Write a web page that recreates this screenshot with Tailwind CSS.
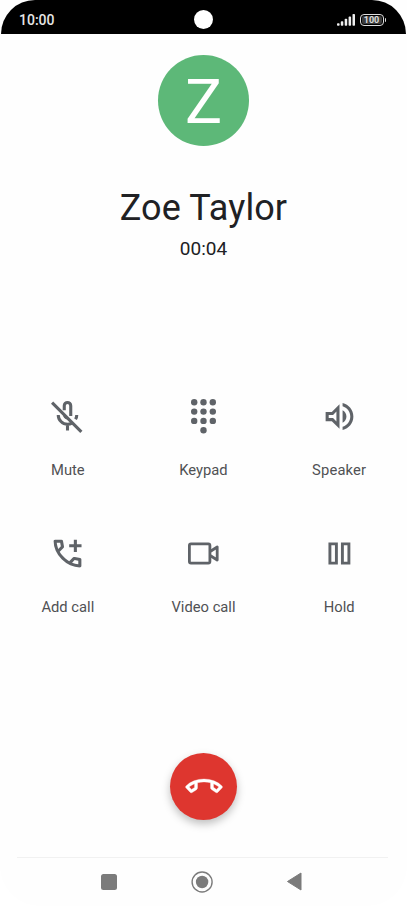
<!DOCTYPE html>
<html lang="en">
  <head>
    <meta charset="UTF-8" />
    <meta name="viewport" content="width=device-width, initial-scale=1.0" />
    <title>Ongoing call</title>
    <script src="https://cdn.jsdelivr.net/npm/@tailwindcss/browser@4"></script>
  </head>
  <body class="bg-white font-['Roboto','Liberation_Sans',sans-serif] text-[#202124]">
    <div class="flex h-[906px] w-[407px] flex-col overflow-hidden rounded-b-[40px] bg-[#fefefe]">
      <!-- status bar -->
      <header class="relative mx-px flex h-[34px] items-center justify-between rounded-t-[36px] bg-black pt-1.5 pr-5 pl-[18px] text-white">
        <span class="text-[14px] leading-4 font-medium text-[#e6e6e6]">10:00</span>
        <span class="absolute top-[9.5px] left-[192.5px] size-[19.5px] rounded-full bg-white"></span>
        <div class="flex items-center gap-[5px]">
          <svg class="h-3 w-[18px]" viewBox="0 0 18 12" fill="#eee">
            <rect x="0" y="9.3" width="2.6" height="2.5" rx=".8" />
            <rect x="3.8" y="7.3" width="2.5" height="4.5" rx=".8" />
            <rect x="7.7" y="4.8" width="2.5" height="7" rx=".8" />
            <rect x="11.6" y="2.6" width="2.5" height="9.2" rx=".8" />
            <rect x="15.5" y="0" width="2.5" height="11.8" rx=".8" />
          </svg>
          <div class="flex items-center gap-px">
            <span class="flex h-3 w-[24px] items-center justify-center rounded-[4px] border border-[#ddd] bg-black p-px">
              <span class="flex h-full w-full items-center justify-center rounded-[2px] bg-[#3c3c3c] text-[9px] leading-none font-bold text-[#ddd]">100</span>
            </span>
            <span class="h-1 w-[1.5px] rounded-r bg-[#ddd]"></span>
          </div>
        </div>
      </header>

      <!-- caller -->
      <section class="flex h-[350px] flex-col items-center pt-[21px]">
        <div class="flex size-[91px] items-center justify-center rounded-full bg-[#5db878] pt-0.5 text-[62px] leading-none text-white">Z</div>
        <h1 class="mt-[40px] text-[36px] leading-[44px] tracking-[0.1px]">Zoe Taylor</h1>
        <p class="mt-[7px] text-[19px] leading-6">00:04</p>
      </section>

      <!-- call controls -->
      <main class="grid grid-cols-3 gap-y-[55px] pt-[14px] text-center text-[14.75px] leading-5 text-[#505154]">
        <div class="flex h-[82px] flex-col items-center justify-between">
          <svg class="size-[37px]" viewBox="0 0 24 24" fill="none" stroke="#5f6368" stroke-width="2">
            <path d="M9.9 7.9V5a2.1 2.1 0 0 1 4.2 0v6.6" />
            <path d="M18 11c0 1-.3 2-.8 2.8M6 11c0 3.3 2.7 6 6 6 1.1 0 2-.2 2.8-.7M12 17v4" />
            <path d="M9.6 10.5c0 1.5 1 2.6 2.6 2.8" stroke-width="1.2" />
            <path d="M2 3 21 22" />
          </svg>
          <span>Mute</span>
        </div>
        <div class="flex h-[82px] flex-col items-center justify-between">
          <svg class="size-[37px]" viewBox="0 0 37 37" fill="#5f6368">
            <circle cx="9.2" cy="4.3" r="3.2" /><circle cx="18.5" cy="4.3" r="3.2" /><circle cx="27.8" cy="4.3" r="3.2" />
            <circle cx="9.2" cy="13.6" r="3.2" /><circle cx="18.5" cy="13.6" r="3.2" /><circle cx="27.8" cy="13.6" r="3.2" />
            <circle cx="9.2" cy="22.9" r="3.2" /><circle cx="18.5" cy="22.9" r="3.2" /><circle cx="27.8" cy="22.9" r="3.2" />
            <circle cx="18.5" cy="32.2" r="3.2" />
          </svg>
          <span>Keypad</span>
        </div>
        <div class="flex h-[82px] flex-col items-center justify-between">
          <svg class="size-[37px]" viewBox="0 0 24 24" fill="#5f6368">
            <path d="M3 9v6h4l5 5V4L7 9H3zm7-.17v6.34L7.83 13H5v-2h2.83L10 8.83zM16.5 12c0-1.77-1.02-3.29-2.5-4.03v8.05c1.48-.73 2.5-2.25 2.5-4.02zM14 3.23v2.06c2.89.86 5 3.54 5 6.71s-2.11 5.85-5 6.71v2.06c4.01-.91 7-4.49 7-8.77 0-4.28-2.99-7.86-7-8.77z" />
          </svg>
          <span class="tracking-[0.15px]">Speaker</span>
        </div>
        <div class="flex h-[82px] flex-col items-center justify-between">
          <svg class="size-[37px]" viewBox="0 0 24 24" fill="#5f6368">
            <path d="M19.95 21q-3.125 0-6.175-1.363-3.05-1.362-5.55-3.862-2.5-2.5-3.862-5.55Q3 7.175 3 4.05q0-.45.3-.75t.75-.3H8.1q.35 0 .625.238.275.237.325.562l.65 3.5q.05.4-.025.675-.075.275-.275.475L6.975 10.9q.5.925 1.187 1.785.688.86 1.513 1.665.775.775 1.625 1.438.85.662 1.8 1.212l2.35-2.35q.225-.225.588-.338.362-.112.712-.062l3.45.7q.35.1.575.363.225.262.225.587v4.05q0 .45-.3.75t-.75.3zM6.025 9l1.65-1.65L7.25 5H5.025q.125 1.025.35 2.025.225 1 .65 1.975zm8.95 8.95q.975.425 1.988.675 1.012.25 2.037.325v-2.2l-2.35-.475z" />
            <path d="M18.1 6V3h-2v3h-3v2h3v3h2V8h3V6z" />
          </svg>
          <span>Add call</span>
        </div>
        <div class="flex h-[82px] flex-col items-center justify-between">
          <svg class="size-[37px]" viewBox="0 0 37 37" fill="none" stroke="#5f6368" stroke-width="2.8">
            <rect x="4.4" y="8.9" width="20.5" height="19.2" rx="1.6" />
            <path d="M25.5 16.3 32.2 12v13l-6.7-4.3" stroke-linejoin="round" />
          </svg>
          <span>Video call</span>
        </div>
        <div class="flex h-[82px] flex-col items-center justify-between">
          <svg class="size-[37px]" viewBox="0 0 37 37" fill="none" stroke="#5f6368" stroke-width="2.9">
            <path d="M8.9 8.9h6.5v19.2H8.9zM21.4 8.9h6.5v19.2h-6.5z" />
          </svg>
          <span>Hold</span>
        </div>
      </main>

      <!-- hang up -->
      <div class="mt-[136px] flex justify-center">
        <button class="flex size-[66.5px] items-center justify-center rounded-full bg-[#de362f] pt-px shadow-[0_4px_8px_rgba(0,0,0,0.25)]">
          <svg class="size-[36px] rotate-[135deg]" viewBox="0 0 24 24" fill="#fff" stroke="#fff" stroke-width=".2">
            <path d="M19.95 21q-3.125 0-6.175-1.363-3.05-1.362-5.55-3.862-2.5-2.5-3.862-5.55Q3 7.175 3 4.05q0-.45.3-.75t.75-.3H8.1q.35 0 .625.238.275.237.325.562l.65 3.5q.05.4-.025.675-.075.275-.275.475L6.975 10.9q.5.925 1.187 1.785.688.86 1.513 1.665.775.775 1.625 1.438.85.662 1.8 1.212l2.35-2.35q.225-.225.588-.338.362-.112.712-.062l3.45.7q.35.1.575.363.225.262.225.587v4.05q0 .45-.3.75t-.75.3zM6.025 9l1.65-1.65L7.25 5H5.025q.125 1.025.35 2.025.225 1 .65 1.975zm8.95 8.95q.975.425 1.988.675 1.012.25 2.037.325v-2.2l-2.35-.475z" />
          </svg>
        </button>
      </div>

      <!-- system navigation -->
      <nav class="mr-[19px] ml-[17px] mt-auto flex h-[49px] items-center justify-between border-t border-[#f1f1f1] pr-[86px] pb-px pl-[84px]">
        <span class="size-4 rounded-[2.5px] bg-[#7b7b7b]"></span>
        <svg class="size-[22px]" viewBox="0 0 22 22">
          <circle cx="11.1" cy="11" r="10" fill="none" stroke="#7b7b7b" stroke-width="1.4" />
          <circle cx="11.1" cy="11" r="6.2" fill="#7b7b7b" />
        </svg>
        <svg class="h-[19px] w-4" viewBox="0 0 16 19" fill="#7b7b7b" stroke="#7b7b7b" stroke-linejoin="round">
          <path d="M1.5 9.5 15 1v17z" />
        </svg>
      </nav>
    </div>
  </body>
</html>
